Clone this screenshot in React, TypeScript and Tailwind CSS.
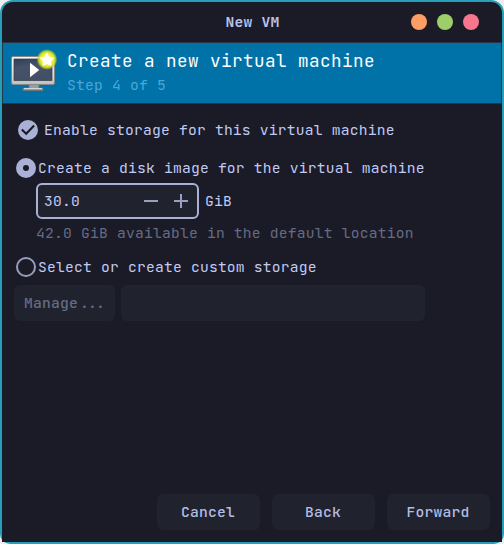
import type { ReactNode } from "react";

function VmIcon() {
  return (
    <svg width="56" height="50" viewBox="0 0 56 50" className="block shrink-0">
      <defs>
        <linearGradient id="screen" x1="0" y1="0" x2="0.3" y2="1">
          <stop offset="0" stopColor="#2d4058" />
          <stop offset="0.4" stopColor="#455267" />
          <stop offset="1" stopColor="#434f66" />
        </linearGradient>
        <linearGradient id="frame" x1="0" y1="0" x2="0" y2="1">
          <stop offset="0" stopColor="#f4f4f3" />
          <stop offset="0.8" stopColor="#d5d5d4" />
          <stop offset="1" stopColor="#b3b4b4" />
        </linearGradient>
        <radialGradient id="glow">
          <stop offset="0" stopColor="#feff90" />
          <stop offset="0.6" stopColor="#eef22c" />
          <stop offset="0.8" stopColor="#cddd20" stopOpacity="0.85" />
          <stop offset="1" stopColor="#9bc43a" stopOpacity="0" />
        </radialGradient>
      </defs>
      <path d="M23 38h10v4h4v2.5H17V42h6z" fill="#9b9d9e" stroke="#6c7073" strokeWidth="0.8" />
      <path d="M18 42.5h18" stroke="#d4d5d5" />
      <rect x="5.5" y="10.5" width="43" height="28" rx="1.5" fill="url(#frame)" stroke="#85898b" />
      <path d="M7 36.8h40" stroke="#c4c5c5" strokeWidth="2" />
      <rect x="8" y="13" width="38" height="21.5" fill="url(#screen)" stroke="#303c4c" strokeWidth="0.7" />
      <path d="M24 16.7v14.6l9.3-7.3z" fill="#fff" />
      <circle cx="41" cy="13.5" r="10.5" fill="url(#glow)" />
      <path d="m41 7.4 2 3.9 4.3.7-3.1 3 .7 4.3-3.9-2-3.9 2 .7-4.3-3.1-3 4.3-.7z" fill="#fff" stroke="#fff" strokeWidth="1.2" strokeLinejoin="round" />
    </svg>
  );
}

function DialogButton({ children }: { children: ReactNode }) {
  return (
    <button className="h-9 w-[103px] rounded-md bg-[#20222d] pr-px pb-px font-medium text-[#b4bce4]">
      {children}
    </button>
  );
}

export default function App() {
  return (
    <div className="h-[544px] w-[504px] overflow-hidden bg-[#eeeeee] font-['JetBrains_Mono','DejaVu_Sans_Mono',monospace] text-[14.667px] leading-5 tracking-[0.2px] text-[#c0caf5]">
      <div className="flex h-full flex-col rounded-t-[13px] rounded-b-[10px] bg-[#25a0b8] p-[2px]">
        <div className="flex min-h-0 flex-1 flex-col rounded-t-[11px] bg-[#1a1b26]">
          <header className="grid h-10 shrink-0 grid-cols-[1fr_auto_1fr] items-center">
            <span />
            <h1 className="pb-px pl-px font-bold text-[#b9c1ea]">New VM</h1>
            <div className="flex justify-end gap-2.5 pr-[23px]">
              <i className="size-4 rounded-full bg-[#ff9e64]" />
              <i className="size-4 rounded-full bg-[#9ece6a]" />
              <i className="size-4 rounded-full bg-[#f7768e]" />
            </div>
          </header>
          <section className="flex h-[62px] shrink-0 border border-[#263548] bg-[#0072a8] pt-[3px] pl-[3px]">
            <VmIcon />
            <div className="pt-[3px] pl-[5px]">
              <h2 className="text-[17.6px] leading-6 tracking-[0.44px] text-white">Create a new virtual machine</h2>
              <p className="pt-0.5 text-[#4ba6dc]">Step 4 of 5</p>
            </div>
          </section>
          <main className="flex flex-1 flex-col items-start pt-4 pl-3">
            <label className="flex h-5 items-center gap-1.5 pl-1">
              <svg width="20" height="20" viewBox="0 0 20 20" className="block">
                <circle cx="10" cy="10" r="10" fill="#a9b1d6" />
                <path d="m3.8 9.5 4.4 4.2 7.9-8.2" fill="none" stroke="#1a1b26" strokeWidth="2.1" />
              </svg>
              <span className="pb-px">Enable storage for this virtual machine</span>
            </label>
            <label className="mt-[18px] flex h-5 items-center gap-0.5 pl-0.5">
              <span className="grid size-5 place-items-center rounded-full bg-[#a9b1d6]">
                <i className="size-1.5 rounded-full bg-[#1a1b26]" />
              </span>
              <span className="pb-px">Create a disk image for the virtual machine</span>
            </label>
            <div className="mt-[5px] ml-[22px] flex h-9 items-center gap-1.5">
              <div className="flex h-9 w-[163px] items-center justify-between rounded-md border-2 border-[#a9b1d6] bg-[#20222d] pr-[9px] pl-1.5">
                <span className="pb-px">30.0</span>
                <svg width="44" height="14" viewBox="0 0 44 14" className="block" fill="none" stroke="#989fc2" strokeWidth="2">
                  <path d="M0 7h14M30 7h14M37 0v14" />
                </svg>
              </div>
              <span className="pb-px">GiB</span>
            </div>
            <p className="mt-1 ml-[22px] text-[#666b85]">42.0 GiB available in the default location</p>
            <label className="mt-3.5 flex h-5 items-center gap-0.5 pl-0.5">
              <span className="size-5 rounded-full border-2 border-[#969dbf]" />
              <span className="pb-px">Select or create custom storage</span>
            </label>
            <div className="mt-2 flex gap-1.5">
              <button disabled className="h-9 w-[101px] rounded-md bg-[#20222d] pb-px pl-2.5 text-left font-medium text-[#666b85]">
                Manage<span className="ml-0.5 tracking-[-0.8px]">...</span>
              </button>
              <div className="h-9 w-[304px] rounded-md bg-[#20222d]" />
            </div>
          </main>
          <footer className="flex shrink-0 justify-end gap-3 pr-3 pb-3">
            <DialogButton>Cancel</DialogButton>
            <DialogButton>Back</DialogButton>
            <DialogButton>Forward</DialogButton>
          </footer>
        </div>
      </div>
    </div>
  );
}
